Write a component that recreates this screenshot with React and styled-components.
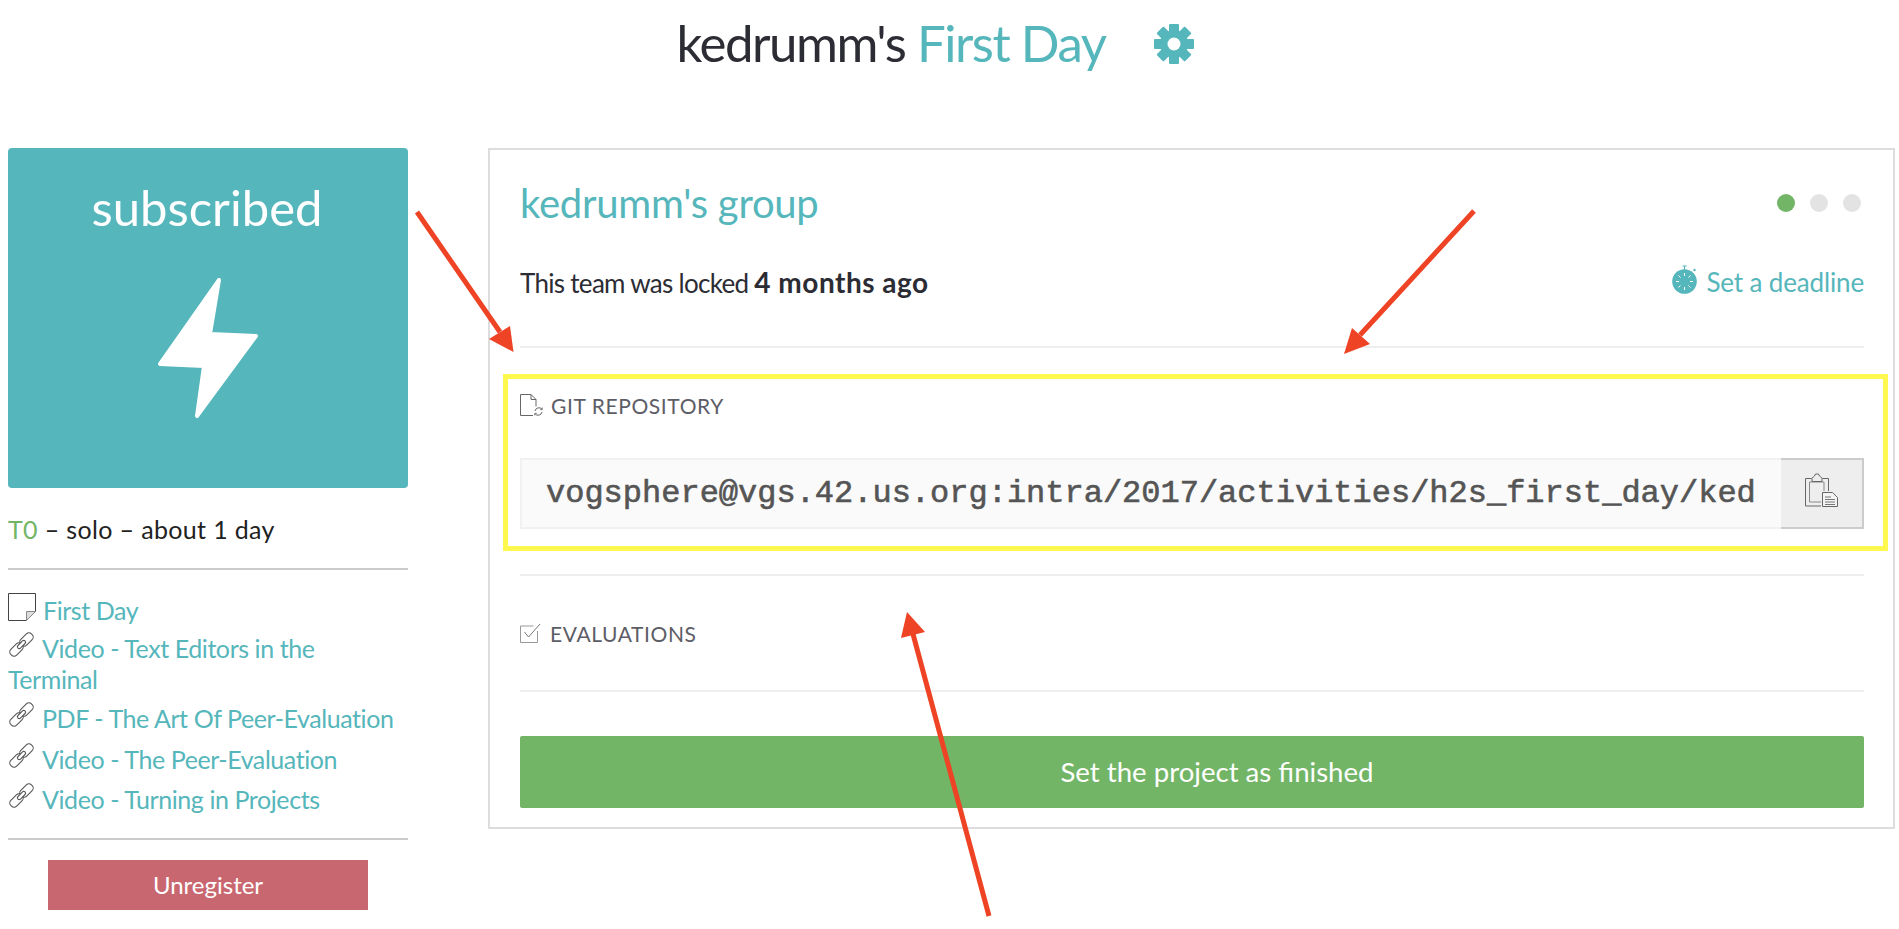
import React from 'react'
import styled, { createGlobalStyle } from 'styled-components'

const TEAL = '#55b6bb'
const GREEN = '#72b566'
const INK = '#2c2c34'

const GlobalStyle = createGlobalStyle`
  html, body {
    margin: 0;
    background: #fff;
    overflow: hidden;
  }
  body {
    font-family: Lato, "Liberation Sans", sans-serif;
    color: ${INK};
  }
`

const Page = styled.div`
  position: relative;
  height: 929px;
`

const Header = styled.header`
  height: 148px;
  display: flex;
  justify-content: center;
  padding-top: 11px;
  box-sizing: border-box;
  padding-right: 28px;
`

const PageTitle = styled.h1`
  margin: 0;
  font-size: 51px;
  font-weight: 400;
  line-height: 64px;
  letter-spacing: -1.5px;
  span {
    color: ${TEAL};
  }
`

const GearLink = styled.a`
  margin-left: 49px;
  margin-top: 13px;
  height: 40px;
  line-height: 0;
`

const Columns = styled.div`
  display: flex;
  align-items: flex-start;
  padding-left: 8px;
  gap: 80px;
`

const Sidebar = styled.aside`
  width: 400px;
  flex: none;
`

const StatusTile = styled.div`
  height: 340px;
  box-sizing: border-box;
  border-radius: 4px;
  background: ${TEAL};
  color: #fff;
  padding-top: 29px;
  display: flex;
  flex-direction: column;
  align-items: center;
`

const StatusName = styled.div`
  font-size: 49px;
  line-height: 60px;
  height: 60px;
  margin-left: -2px;
`

const Bolt = styled.svg`
  margin-top: 41px;
  width: 100px;
  height: 140px;
`

const Meta = styled.div`
  margin-top: 23px;
  font-size: 25px;
  letter-spacing: 0.35px;
  line-height: 36px;
  color: #222;
  b {
    color: ${GREEN};
    font-weight: 400;
  }
`

const SideRule = styled.hr`
  margin: ${p => p.$top}px 0 0;
  border: 0;
  height: 2px;
  background: #ccc;
`

const Links = styled.div`
  padding-top: 25px;
`

const LinkItem = styled.div`
  margin-top: ${p => p.$gap}px;
  font-size: 25px;
  letter-spacing: -0.42px;
  line-height: 31px;
  color: ${TEAL};
  svg {
    vertical-align: ${p => p.$drop}px;
    margin: -8px 7px 0 0;
  }
`

const Unregister = styled.button`
  display: block;
  width: 320px;
  height: 50px;
  margin: 20px auto 0;
  border: 0;
  padding: 0 0 2px;
  background: #c96770;
  color: #fff;
  font: 400 24px Lato, sans-serif;
`

const Panel = styled.main`
  width: 1407px;
  box-sizing: border-box;
  border: 2px solid #ddd;
  padding: 30px 29px 19px 30px;
`

const GroupHead = styled.div`
  height: 46px;
  display: flex;
  align-items: center;
  justify-content: space-between;
`

const GroupName = styled.h2`
  margin: 0;
  font-size: 40px;
  font-weight: 400;
  letter-spacing: -0.25px;
  color: ${TEAL};
`

const Dots = styled.div`
  display: flex;
  gap: 15px;
  margin-right: 3px;
`

const Dot = styled.span`
  width: 18px;
  height: 18px;
  border-radius: 50%;
  background: ${p => (p.$on ? GREEN : '#e3e3e3')};
`

const LockRow = styled.div`
  margin-top: 38px;
  height: 36px;
  display: flex;
  align-items: center;
  justify-content: space-between;
  font-size: 26px;
`

const LockText = styled.span`
  letter-spacing: -0.7px;
  b {
    font-size: 28px;
    font-weight: 700;
    letter-spacing: 0.5px;
  }
`

const Deadline = styled.a`
  display: flex;
  align-items: center;
  gap: 9px;
  letter-spacing: -0.15px;
  color: ${TEAL};
  svg {
    margin-top: -6px;
  }
`

const PanelRule = styled.hr`
  margin: ${p => p.$top}px 0 0;
  border: 0;
  height: 2px;
  background: #eee;
`

const Section = styled.section`
  position: relative;
  padding-top: 41px;
`

const SectionLabel = styled.div`
  height: 32px;
  display: flex;
  align-items: center;
  gap: 8px;
  font-size: 21px;
  letter-spacing: 0.6px;
  color: #5d5d66;
`

const Highlight = styled.div`
  position: absolute;
  left: -17px;
  right: -24px;
  top: 26px;
  height: 177px;
  box-sizing: border-box;
  border: 5px solid #fff94f;
  pointer-events: none;
`

const RepoField = styled.div`
  margin-top: 37px;
  height: 71px;
  display: flex;
`

const RepoUrl = styled.div`
  flex: 1;
  min-width: 0;
  box-sizing: border-box;
  border: 2px solid #f1f1f1;
  border-right: 0;
  background: #fafafa;
  padding: 0 24px;
  font: 400 32px/67px "Liberation Mono", monospace;
  -webkit-text-stroke: 0.6px #555;
  color: #555;
  white-space: nowrap;
  overflow: hidden;
`

const CopyButton = styled.button`
  width: 83px;
  flex: none;
  padding: 0;
  box-sizing: border-box;
  border: 2px solid #ccc;
  border-left: 0;
  background: #eee;
  display: flex;
  align-items: center;
  justify-content: center;
  svg {
    margin-top: -8px;
  }
`

const FinishButton = styled.button`
  display: block;
  width: 100%;
  height: 72px;
  margin-top: 44px;
  border: 0;
  padding: 0 0 2px 50px;
  border-radius: 2px;
  background: ${GREEN};
  color: #fff;
  font: 400 27.6px Lato, sans-serif;
`

const Arrows = styled.svg`
  position: absolute;
  left: 0;
  top: 0;
  pointer-events: none;
`

const GearIcon = () => (
  <svg width="40" height="40" viewBox="0 0 40 40" fill={TEAL}>
    {[0, 45, 90, 135].map(angle => (
      <rect key={angle} x="15" y="0" width="10" height="40" rx="1" transform={`rotate(${angle} 20 20)`} />
    ))}
    <circle cx="20" cy="20" r="14" />
    <circle cx="20" cy="20" r="6.5" fill="#fff" />
  </svg>
)

const NoteIcon = () => (
  <svg width="28" height="28" viewBox="0 0 28 28" fill="none" stroke="#444">
    <path d="M.5.5h27v18l-9 9H.5z" strokeWidth="1" />
    <path d="M18.5 27.5v-9h9z" fill="#ddd" stroke="#888" />
  </svg>
)

const ChainIcon = () => (
  <svg width="27" height="27" viewBox="0 0 27 27" fill="none" stroke="#555" strokeWidth="1.1">
    <rect x="11" y="4.400" width="15" height="8.200" rx="3.600" transform="rotate(-45 18.500 8.500)" />
    <rect x="1" y="14.400" width="15" height="8.200" rx="3.600" transform="rotate(-45 8.500 18.500)" />
    <rect x="8.500" y="11.700" width="10" height="3.600" rx="1.800" fill="#fff" transform="rotate(-45 13.500 13.500)" />
  </svg>
)

const BoltIcon = () => (
  <Bolt viewBox="0 0 100 140">
    <path
      d="M61 2 52 56 98 58 39 138 46 88 2 86Z"
      fill="#fff"
      stroke="#fff"
      strokeWidth="4"
      strokeLinejoin="round"
    />
  </Bolt>
)

const TimerIcon = () => (
  <svg width="25" height="29" viewBox="0 0 25 29" fill="none">
    <path d="M10.5 1h4M12.5 1v4" stroke={TEAL} strokeWidth="1.2" />
    <circle cx="22.5" cy="5" r="1.2" fill={TEAL} />
    <circle cx="12.5" cy="16.5" r="12.3" fill={TEAL} />
    <path
      d="M12.5 8v3M12.5 22v3M4 16.5h3M18 16.5h3M6.5 10.5l2 2M16.5 20.5l2 2M18.5 10.5l-2 2M8.5 20.5l-2 2"
      stroke="#fff"
      strokeWidth="1"
    />
  </svg>
)

const FileSyncIcon = () => (
  <svg width="23" height="23" viewBox="0 0 23 23" fill="none" stroke="#666">
    <path d="M13 21.5H.5V.5H11l5 5v7M11 .5v5h5" />
    <path d="M15 17a4 4 0 0 1 7-1.800M22 18a4 4 0 0 1-7 1.800" />
    <path d="M22.300 13.500v2.200h-2.200M14.700 21.500v-2.200h2.200" strokeWidth=".8" />
  </svg>
)

const CheckBoxIcon = () => (
  <svg width="22" height="21" viewBox="0 0 22 21" fill="none">
    <path d="M17.500 8v11.500H.5V3h13" stroke="#999" />
    <path d="M4.500 9l4 5L20 1" stroke="#777" />
  </svg>
)

const ClipboardIcon = () => (
  <svg width="33" height="34" viewBox="0 0 33 34" fill="none" stroke="#666">
    <path d="M16 33H.5V5.500h6l3-2.500 1-2h3l1 2 3 2.500h6V18" />
    <path d="M16 29H4.500V9H19v9" stroke="#888" />
    <path d="M7 5.500v3h10v-3" />
    <path d="M17.500 19.500h10l5 5v9h-15z" fill="#f4f4f4" />
    <path d="M20 24h6M20 26.500h10M20 29h10M20 31.500h10" stroke="#777" />
  </svg>
)

const links = [
  { id: 1, title: 'First Day', Icon: NoteIcon, gap: 0, drop: -1 },
  { id: 2, title: 'Video - Text Editors in the Terminal', Icon: ChainIcon, gap: 7, drop: 0 },
  { id: 3, title: 'PDF - The Art Of Peer-Evaluation', Icon: ChainIcon, gap: 8, drop: 0 },
  { id: 4, title: 'Video - The Peer-Evaluation', Icon: ChainIcon, gap: 10, drop: 0 },
  { id: 5, title: 'Video - Turning in Projects', Icon: ChainIcon, gap: 9, drop: 0 }
]

const App = () => (
  <Page>
    <GlobalStyle />
    <Header>
      <PageTitle>
        kedrumm's <span>First Day</span>
      </PageTitle>
      <GearLink>
        <GearIcon />
      </GearLink>
    </Header>
    <Columns>
      <Sidebar>
        <StatusTile>
          <StatusName>subscribed</StatusName>
          <BoltIcon />
        </StatusTile>
        <Meta>
          <b>T0</b> – solo – about 1 day
        </Meta>
        <SideRule $top={21} />
        <Links>
          {links.map(({ id, title, Icon, gap, drop }) => (
            <LinkItem key={id} $gap={gap} $drop={drop}>
              <Icon />
              {title}
            </LinkItem>
          ))}
        </Links>
        <SideRule $top={23} />
        <Unregister>Unregister</Unregister>
      </Sidebar>
      <Panel>
        <GroupHead>
          <GroupName>kedrumm's group</GroupName>
          <Dots>
            <Dot $on />
            <Dot />
            <Dot />
          </Dots>
        </GroupHead>
        <LockRow>
          <LockText>
            This team was locked <b>4 months ago</b>
          </LockText>
          <Deadline>
            <TimerIcon />
            Set a deadline
          </Deadline>
        </LockRow>
        <PanelRule $top={46} />
        <Section>
          <SectionLabel>
            <FileSyncIcon />
            GIT REPOSITORY
          </SectionLabel>
          <RepoField>
            <RepoUrl>vogsphere@vgs.42.us.org:intra/2017/activities/h2s_first_day/ked</RepoUrl>
            <CopyButton>
              <ClipboardIcon />
            </CopyButton>
          </RepoField>
          <Highlight />
        </Section>
        <PanelRule $top={45} />
        <Section>
          <SectionLabel>
            <CheckBoxIcon />
            EVALUATIONS
          </SectionLabel>
        </Section>
        <PanelRule $top={41} />
        <FinishButton>Set the project as finished</FinishButton>
      </Panel>
    </Columns>
    <Arrows width="1899" height="929" viewBox="0 0 1899 929" fill="#ee4324" stroke="none">
      <path d="M417 212 500 332M1474 211 1360 335M989 916 913 634" stroke="#ee4324" strokeWidth="5" />
      <path d="M513.500 352 510 326 489 339Z" />
      <path d="M1344 354 1352 328 1370 344Z" />
      <path d="M907 612 901 638 925 632Z" />
    </Arrows>
  </Page>
)

export default App
